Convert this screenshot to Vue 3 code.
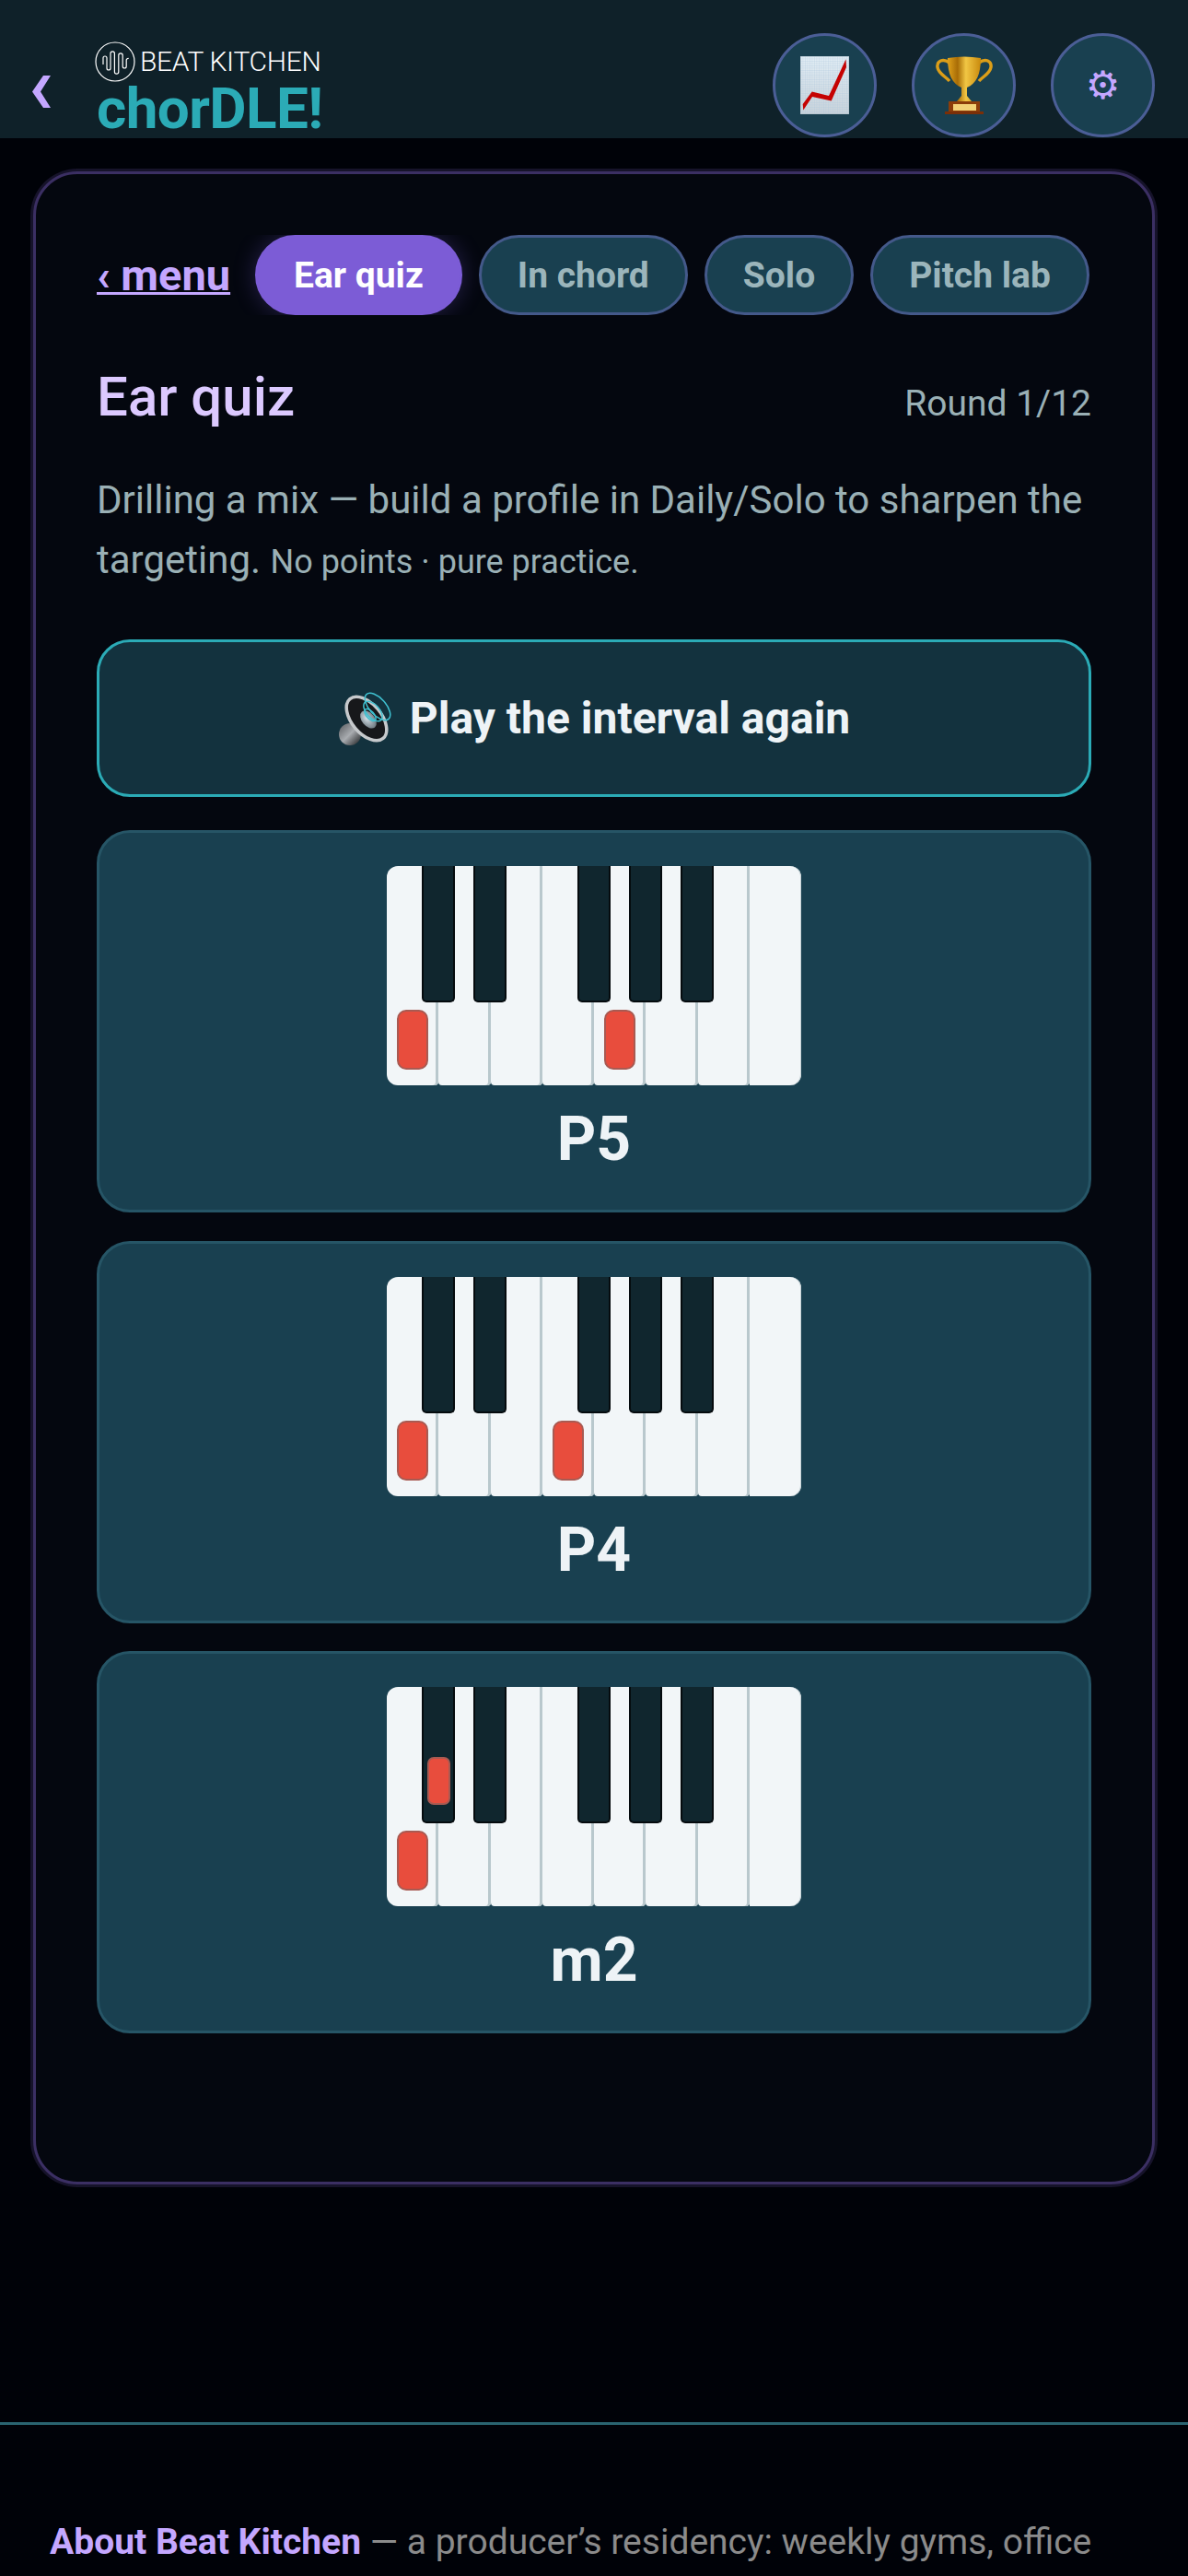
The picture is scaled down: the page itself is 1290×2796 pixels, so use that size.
<script setup>
const tabs = ['Ear quiz', 'In chord', 'Solo', 'Pitch lab']

// notes: white index 0-7, black keys sit on the divider after a white key
const blackAfter = [1, 2, 4, 5, 6]
const keyW = 56.2

const answers = [
  { label: 'P5', whites: [0, 4], blacks: [] },
  { label: 'P4', whites: [0, 3], blacks: [] },
  { label: 'm2', whites: [0], blacks: [1] }
]
</script>

<template>
  <div class="page">
    <header class="topbar">
      <svg class="back" viewBox="0 0 20 35" width="20" height="35">
        <polygon points="12,0 20,0 9,17.5 20,35 12,35 0,17.5" fill="#c4a7ff" />
      </svg>
      <div class="brand">
        <div class="bk">
          <svg class="bk-mark" viewBox="0 0 44 44" width="44" height="44" fill="none" stroke="#fff">
            <circle cx="22" cy="22" r="21" stroke-width="1.2" />
            <path d="M9 25 V18 a2 2 0 0 1 4 0 V29 a2 2 0 0 0 4 0 V13 a2.2 2.2 0 0 1 4.4 0 V33 a2.2 2.2 0 0 0 4.4 0 V15 a2.2 2.2 0 0 1 4.4 0 V27 a2 2 0 0 0 4 0 V20 a2 2 0 0 1 2.5 -1.5" stroke-width="1.2" />
          </svg>
          <span class="bk-name">BEAT KITCHEN</span>
        </div>
        <div class="title">chorDLE!</div>
      </div>
      <div class="actions">
        <button class="round">
          <svg viewBox="0 0 53 63" width="53" height="63">
            <defs>
              <linearGradient id="paper" x1="0" y1="0" x2="0" y2="1">
                <stop offset="0" stop-color="#e3eef5" />
                <stop offset="1" stop-color="#c9d3da" />
              </linearGradient>
              <pattern id="grid" width="2.5" height="2.5" patternUnits="userSpaceOnUse">
                <path d="M2.5 0 H0 V2.5" fill="none" stroke="#a9c6dc" stroke-width="0.5" />
              </pattern>
            </defs>
            <rect width="53" height="63" fill="url(#paper)" stroke="#a9b4ba" stroke-width="0.8" />
            <rect width="53" height="63" fill="url(#grid)" />
            <polygon points="2.7,52 12.7,38.5 31,43 49.5,3.3 50,12 33.7,48.5 13,44 3.3,58.5" fill="#c50202" />
          </svg>
        </button>
        <button class="round">
          <svg viewBox="0 0 62 63" width="62" height="63">
            <defs>
              <linearGradient id="gold" x1="0" y1="0" x2="1" y2="0">
                <stop offset="0" stop-color="#e0a21b" />
                <stop offset="0.3" stop-color="#a86c06" />
                <stop offset="0.55" stop-color="#f1c644" />
                <stop offset="1" stop-color="#c98a0d" />
              </linearGradient>
            </defs>
            <path d="M15 7 C8 2 1 5 2 12 C3 19 11 22 15 27" fill="none" stroke="#dc9e18" stroke-width="3.4" />
            <path d="M47 7 C54 2 61 5 60 12 C59 19 51 22 47 27" fill="none" stroke="#dc9e18" stroke-width="3.4" />
            <path d="M13 2 Q31 -1 49 2 C49 20 44 30 34 34 L34 43 L39 49 L23 49 L28 43 L28 34 C18 30 13 20 13 2 Z" fill="url(#gold)" />
            <rect x="14" y="49" width="34" height="11" fill="#8c3d0a" />
            <rect x="19" y="52" width="25" height="7" fill="#f3d277" />
            <rect x="10" y="60" width="42" height="3" fill="#7a2f08" />
          </svg>
        </button>
        <button class="round gear">⚙</button>
      </div>
    </header>

    <main class="card">
      <nav class="tabs">
        <a class="menu-link">‹ menu</a>
        <button v-for="(tab, i) in tabs" :key="tab" class="pill" :class="{ active: i === 0 }">{{ tab }}</button>
      </nav>

      <div class="quiz-head">
        <h2>Ear quiz</h2>
        <span class="round-no">Round 1/12</span>
      </div>

      <p class="intro">
        Drilling a mix — build a profile in Daily/Solo to sharpen the targeting.
        <small>No points · pure practice.</small>
      </p>

      <button class="play">
        <svg viewBox="0 0 60 60" width="60" height="60">
          <defs>
            <radialGradient id="dome" cx="0.45" cy="0.4" r="0.6">
              <stop offset="0" stop-color="#d5dfe6" />
              <stop offset="1" stop-color="#6f7a82" />
            </radialGradient>
            <linearGradient id="mag" x1="0" y1="0" x2="1" y2="1">
              <stop offset="0" stop-color="#55585c" />
              <stop offset="0.5" stop-color="#a9acb0" />
              <stop offset="1" stop-color="#17181a" />
            </linearGradient>
          </defs>
          <ellipse cx="13" cy="47" rx="12" ry="12" fill="url(#mag)" />
          <ellipse cx="31" cy="30" rx="16" ry="28" transform="rotate(-40 31 30)" fill="#17181b" stroke="#c6c9cc" stroke-width="3.5" />
          <ellipse cx="33" cy="31" rx="7" ry="11" transform="rotate(-40 33 31)" fill="url(#dome)" />
          <g fill="none" stroke="#3fc0d0" stroke-width="1.5">
            <ellipse cx="43" cy="17" rx="9" ry="18" transform="rotate(-42 43 17)" />
            <ellipse cx="38" cy="22" rx="7" ry="13" transform="rotate(-42 38 22)" />
            <ellipse cx="35" cy="26" rx="4" ry="8" transform="rotate(-42 35 26)" />
          </g>
        </svg>
        <span>Play the interval again</span>
      </button>

      <div class="answers">
        <button v-for="a in answers" :key="a.label" class="answer">
          <div class="piano">
            <div v-for="n in 8" :key="n" class="white">
              <i v-if="a.whites.includes(n - 1)" class="dot"></i>
            </div>
            <div
              v-for="(b, bi) in blackAfter"
              :key="b"
              class="black"
              :style="{ left: b * keyW - 18 + 'px' }"
            >
              <i v-if="a.blacks.includes(bi + 1)" class="dot small"></i>
            </div>
          </div>
          <div class="label">{{ a.label }}</div>
        </button>
      </div>
    </main>

    <footer class="foot">
      <p><b>About Beat Kitchen</b> — a producer’s residency: weekly gyms, office</p>
    </footer>
  </div>
</template>

<style>
html, body {
  background: #000208;
  margin: 0;
}
</style>

<style scoped>
.page {
  height: 2796px;
  overflow: hidden;
  background: #000208;
  font-family: Roboto, "Liberation Sans", sans-serif;
}
button {
  font-family: inherit;
  cursor: pointer;
}

.topbar {
  height: 150px;
  box-sizing: border-box;
  background: #0f2129;
  display: flex;
  align-items: flex-end;
  padding: 0 36px 1px 35px;
}
.back {
  margin-bottom: 32px;
}
.brand {
  margin-left: 48px;
  margin-bottom: 6px;
}
.bk {
  display: flex;
  align-items: center;
  gap: 5px;
  height: 44px;
}
.bk-name {
  color: #fff;
  font-size: 30px;
  font-weight: 300;
  letter-spacing: -0.3px;
  line-height: 44px;
}
.title {
  color: #2babb6;
  font-size: 62px;
  font-weight: 700;
  line-height: 50px;
  letter-spacing: -0.6px;
  margin-left: 2px;
  margin-top: 4px;
}
.actions {
  margin-left: auto;
  display: flex;
  gap: 38px;
}
.round {
  width: 113px;
  height: 113px;
  padding: 0;
  border-radius: 50%;
  border: 3px solid #4b5e96;
  background: #194050;
  display: flex;
  align-items: center;
  justify-content: center;
}
.gear {
  color: #c4a7ff;
  font-size: 42px;
  font-family: "DejaVu Sans", sans-serif;
}

.card {
  margin: 36px 36px 0;
  height: 2185px;
  box-sizing: border-box;
  padding: 66px 66px 0;
  background: #04070f;
  border: 3px solid #3b2f63;
  border-radius: 48px;
  box-shadow: 0 0 0 3px #16132a;
}

.tabs {
  display: flex;
  align-items: center;
  gap: 18px;
  height: 87px;
  overflow: hidden;
}
.menu-link {
  width: 148px;
  color: #c4a7ff;
  font-size: 47px;
  font-weight: 700;
  text-decoration: underline;
  text-decoration-thickness: 3px;
  margin-right: 6px;
  white-space: nowrap;
}
.pill {
  height: 87px;
  padding: 0 39px;
  box-sizing: border-box;
  border-radius: 44px;
  border: 3px solid #44598a;
  background: #194050;
  color: #9bb5bb;
  font-size: 39px;
  font-weight: 700;
  white-space: nowrap;
}
.pill.active {
  background: #7c5cd6;
  border-color: #7c5cd6;
  color: #fff;
  box-shadow: 0 0 24px rgba(124, 92, 214, 0.3);
}

.quiz-head {
  display: flex;
  justify-content: space-between;
  align-items: baseline;
  margin-top: 54px;
}
.quiz-head h2 {
  margin: 0;
  color: #dcc9ff;
  font-size: 60px;
  font-weight: 500;
  line-height: 70px;
}
.round-no {
  color: #9ab0b5;
  font-size: 39px;
}
.intro {
  margin: 44px 0 0;
  color: #9ab0b5;
  font-size: 42px;
  line-height: 65px;
}
.intro small {
  font-size: 36px;
}

.play {
  width: 100%;
  height: 171px;
  margin-top: 51px;
  box-sizing: border-box;
  border: 3px solid #2babb6;
  border-radius: 36px;
  background: #13323e;
  color: #eef3f6;
  font-size: 48px;
  font-weight: 700;
  display: flex;
  align-items: center;
  justify-content: center;
  gap: 18px;
}

.answers {
  margin-top: 36px;
  display: flex;
  flex-direction: column;
  gap: 30.5px;
}
.answer {
  height: 415px;
  box-sizing: border-box;
  padding: 36px 0 0;
  border: 3px solid #265566;
  border-radius: 36px;
  background: #194050;
  display: flex;
  flex-direction: column;
  align-items: center;
}
.piano {
  position: relative;
  display: flex;
  width: 450px;
  height: 238px;
}
.white {
  position: relative;
  flex: 1;
  background: #f2f6f8;
  border-radius: 0 0 4px 4px;
  box-shadow: inset -3px 0 0 #b9c8cd;
}
.white:first-child {
  border-radius: 12px 0 4px 12px;
}
.white:nth-child(8) {
  border-radius: 0 12px 12px 0;
  box-shadow: inset -1px 0 0 #c6d2d6;
}
.black {
  position: absolute;
  top: 0;
  width: 36px;
  height: 148px;
  box-sizing: border-box;
  background: #10262e;
  border: 2px solid #050b0e;
  border-top: 0;
  border-radius: 0 0 5px 5px;
}
.dot {
  position: absolute;
  left: 11px;
  bottom: 17px;
  width: 34px;
  height: 65px;
  box-sizing: border-box;
  background: #e84d3d;
  border: 2px solid #a85a52;
  border-radius: 10px;
}
.dot.small {
  left: 3.5px;
  bottom: 18px;
  width: 25px;
  height: 52px;
  border-radius: 7px;
}
.label {
  margin-top: 20px;
  color: #eef3f6;
  font-size: 66px;
  font-weight: 700;
  line-height: 78px;
}

.foot {
  margin-top: 258px;
  border-top: 3px solid #2a6470;
  padding: 97px 54px 0;
}
.foot p {
  margin: 0;
  color: #8b8b8b;
  font-size: 39px;
  line-height: 60px;
}
.foot b {
  color: #c4a7ff;
  font-weight: 700;
}
</style>
